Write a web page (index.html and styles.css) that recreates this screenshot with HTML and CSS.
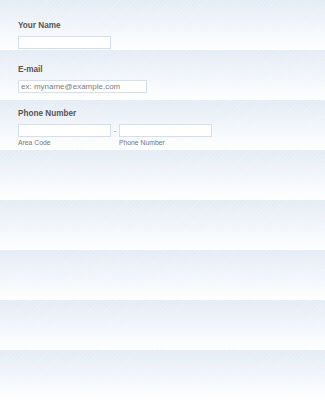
FILE: index.html
```html
<!DOCTYPE html>
<html lang="en">
<head>
  <meta charset="UTF-8" />
  <meta name="viewport" content="width=device-width, initial-scale=1.0" />
  <title>Contact Form</title>
  <link rel="stylesheet" href="styles.css">
</head>
<body>
  <form class="form-all">
    <ul class="form-section">
      <li class="form-line">
        <label class="form-label" for="name">Your Name</label>
        <input class="form-textbox short" type="text" id="name">
      </li>
      <li class="form-line">
        <label class="form-label" for="email">E-mail</label>
        <input class="form-textbox long" type="text" id="email" placeholder="ex: myname@example.com">
      </li>
      <li class="form-line">
        <label class="form-label" for="area">Phone Number</label>
        <div class="phone-row">
          <span class="sub-field">
            <input class="form-textbox short" type="text" id="area">
            <label class="sub-label" for="area">Area Code</label>
          </span>
          <span class="dash">-</span>
          <span class="sub-field">
            <input class="form-textbox short" type="text" id="phone">
            <label class="sub-label" for="phone">Phone Number</label>
          </span>
        </div>
      </li>
    </ul>
  </form>
</body>
</html>
```

FILE: styles.css
```css
* {
  box-sizing: border-box;
}
html, body {
  height: 100%;
}
body {
  margin: 0;
  font-family: 'Liberation Sans', Arial, sans-serif;
  background-color: #fff;
  background-image:
    repeating-linear-gradient(135deg, rgba(255, 255, 255, 0.2) 0 1px, transparent 1px 3px),
    linear-gradient(180deg, #e3ebf5 0%, #edf2f9 35%, #f6f9fc 70%, #ffffff 100%);
  background-size: auto, 100% 50px;
}
.form-section {
  list-style: none;
  margin: 0;
  padding: 20px 0 0 18px;
}
.form-line {
  height: 44px;
}
.form-label {
  display: block;
  font-size: 8.2px;
  line-height: 11px;
  font-weight: bold;
  color: #555;
  margin-bottom: 5px;
}
.form-textbox {
  display: block;
  height: 13px;
  padding: 0 2px;
  margin: 0;
  border: 1px solid #d3dfec;
  background: #fff;
  font-family: 'Liberation Sans', Arial, sans-serif;
  font-size: 8px;
  color: #555;
  outline: none;
}
.form-textbox::placeholder {
  color: #7d7d7d;
}
.short {
  width: 93px;
}
.long {
  width: 129px;
}
.phone-row {
  display: flex;
  align-items: flex-start;
}
.sub-field {
  display: flex;
  flex-direction: column;
}
.dash {
  width: 8px;
  text-align: center;
  font-size: 8px;
  line-height: 13px;
  color: #777;
}
.sub-label {
  font-size: 6.8px;
  line-height: 9px;
  color: #777;
  margin-top: 1px;
}
```
